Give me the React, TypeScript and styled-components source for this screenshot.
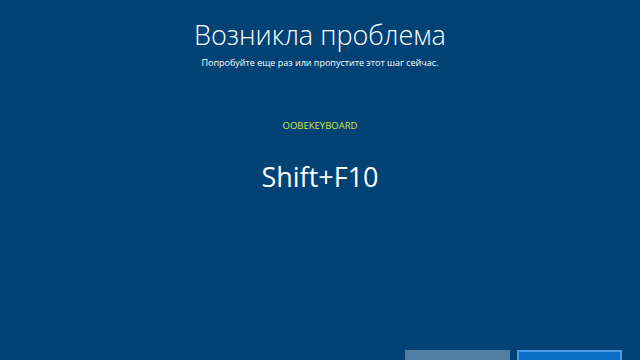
import React from "react";
import styled, { createGlobalStyle } from "styled-components";

const Global = createGlobalStyle`
  html, body { margin: 0; padding: 0; }
  body { background: #024275; overflow: hidden; }
`;

const Screen = styled.div`
  width: 640px;
  height: 360px;
  background: #024275;
  display: flex;
  flex-direction: column;
  align-items: center;
  font-family: "Open Sans", "Noto Sans", sans-serif;
  color: #ffffff;
  overflow: hidden;
`;

const Title = styled.h1`
  margin: 17px 0 0;
  font-size: 27px;
  font-weight: 300;
  line-height: 36px;
  letter-spacing: 0;
`;

const Subtitle = styled.p`
  margin: 3px 0 0;
  font-size: 9px;
  line-height: 13px;
  color: #ffffff;
`;

const Code = styled.div`
  margin-top: 51px;
  font-size: 9.5px;
  line-height: 12px;
  color: #d2e646;
`;

const Keys = styled.div`
  margin-top: 28px;
  font-size: 27px;
  line-height: 34px;
  font-weight: 400;
`;

const Footer = styled.div`
  margin-top: auto;
  align-self: stretch;
  display: flex;
  justify-content: flex-end;
  gap: 7px;
  padding-right: 18px;
  height: 10px;
`;

const Button = styled.div<{ $primary?: boolean }>`
  width: 105px;
  height: 20px;
  box-sizing: border-box;
  background: ${(p) => (p.$primary ? "#0a6ec9" : "#4f7ea0")};
  border: ${(p) => (p.$primary ? "2px solid #4a9ae6" : "none")};
`;

export default function App() {
  return (
    <>
      <Global />
      <Screen>
        <Title>Возникла проблема</Title>
        <Subtitle>Попробуйте еще раз или пропустите этот шаг сейчас.</Subtitle>
        <Code>OOBEKEYBOARD</Code>
        <Keys>Shift+F10</Keys>
        <Footer>
          <Button />
          <Button $primary />
        </Footer>
      </Screen>
    </>
  );
}
